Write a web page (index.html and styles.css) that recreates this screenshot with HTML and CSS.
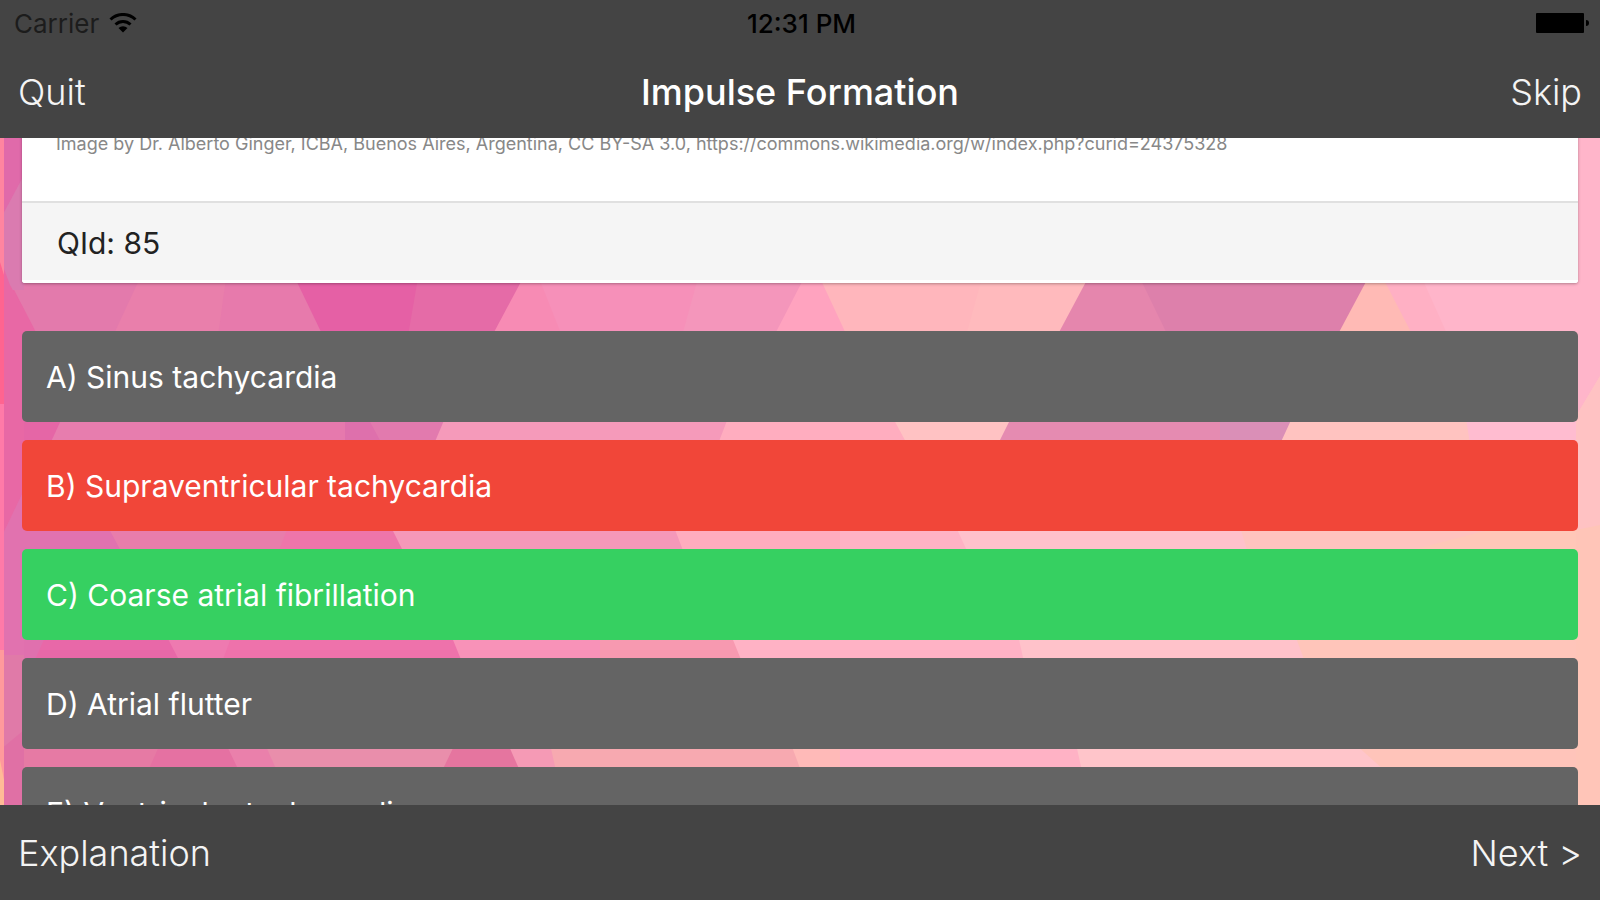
FILE: index.html
```html
<!DOCTYPE html>
<html lang="en">
<head>
    <title>Impulse Formation</title>
    <meta charset="UTF-8">
    <meta name="viewport" content="width=device-width, initial-scale=1">
    <link rel="stylesheet" href="styles.css">
</head>

<body>
    <header class="topbar">
        <div class="status">
            <div class="carrier">
                <span>Carrier</span>
                <svg class="wifi" width="28" height="20" viewBox="0 0 28 20" aria-hidden="true">
                    <path d="M1.500 6.500 A18 18 0 0 1 26.500 6.500" />
                    <path d="M6.500 11.500 A11 11 0 0 1 21.500 11.500" />
                    <path class="wifi-dot" d="M14 19.500 L9.500 15 A7 7 0 0 1 18.500 15 Z" />
                </svg>
            </div>
            <div class="time">12:31 PM</div>
            <svg class="battery" width="54" height="20" viewBox="0 0 54 20" aria-hidden="true">
                <rect x="1" y="0" width="48" height="20" rx="1" />
                <path d="M51 7 Q54 7 54 10 Q54 13 51 13 Z" />
            </svg>
        </div>
        <nav class="navbar">
            <button class="bar-btn" type="button">Quit</button>
            <h1 class="title">Impulse Formation</h1>
            <button class="bar-btn right" type="button">Skip</button>
        </nav>
    </header>

    <main class="content">
        <svg class="backdrop" viewBox="0 138 1600 667" preserveAspectRatio="none" aria-hidden="true">
            <rect x="0" y="138" width="1600" height="667" fill="#ffbcc6" />
            <!-- row 1 -->
            <g>
                <polygon fill="#e868a5" points="0,278 1600,278 1600,336 0,336" />
                <polygon fill="#e37aac" points="8,278 1600,278 1600,336 38,336" />
                <polygon fill="#e97fab" points="140,278 1600,278 1600,336 113,336" />
                <polygon fill="#e77aac" points="226,278 1600,278 1600,336 218,336" />
                <polygon fill="#e560a5" points="295,278 1600,278 1600,336 323,336" />
                <polygon fill="#e56ba7" points="418,278 1600,278 1600,336 408,336" />
                <polygon fill="#f78bb4" points="523,278 1600,278 1600,336 492,336" />
                <polygon fill="#f690b9" points="539,278 1600,278 1600,336 562,336" />
                <polygon fill="#f496bb" points="698,278 1600,278 1600,336 682,336" />
                <polygon fill="#ffa3bf" points="804,278 1600,278 1600,336 774,336" />
                <polygon fill="#ffb6bc" points="820,278 1600,278 1600,336 847,336" />
                <polygon fill="#ffbabd" points="982,278 1600,278 1600,336 966,336" />
                <polygon fill="#e586ad" points="1088,278 1600,278 1600,336 1057,336" />
                <polygon fill="#dd80ab" points="1140,278 1600,278 1600,336 1168,336" />
                <polygon fill="#ffbab5" points="1368,278 1600,278 1600,336 1337,336" />
                <polygon fill="#ffb0c4" points="1383,278 1600,278 1600,336 1413,336" />
                <polygon fill="#ffb5ca" points="1422,278 1600,278 1600,336 1448,336" />
            </g>
            <!-- row 2 -->
            <g>
                <polygon fill="#e566a6" points="0,418 1600,418 1600,444 0,444" />
                <polygon fill="#e77dae" points="62,418 1600,418 1600,444 50,444" />
                <polygon fill="#e679ad" points="160,418 1600,418 1600,444 160,444" />
                <polygon fill="#de70ac" points="345,418 1600,418 1600,444 345,444" />
                <polygon fill="#e27aae" points="368,418 1600,418 1600,444 382,444" />
                <polygon fill="#f59aba" points="445,418 1600,418 1600,444 434,444" />
                <polygon fill="#ffadbf" points="728,418 1600,418 1600,444 718,444" />
                <polygon fill="#ffc2c3" points="893,418 1600,418 1600,444 907,444" />
                <polygon fill="#e58bb1" points="1011,418 1600,418 1600,444 998,444" />
                <polygon fill="#da8fb7" points="1220,418 1600,418 1600,444 1220,444" />
                <polygon fill="#ffc3c0" points="1292,418 1600,418 1600,444 1280,444" />
                <polygon fill="#ffbcd0" points="1466,418 1600,418 1600,444 1470,444" />
            </g>
            <!-- row 3 -->
            <g>
                <polygon fill="#e172af" points="0,527 1600,527 1600,553 0,553" />
                <polygon fill="#e87dab" points="108,527 1600,527 1600,553 122,553" />
                <polygon fill="#ee75aa" points="288,527 1600,527 1600,553 278,553" />
                <polygon fill="#f598b9" points="391,527 1600,527 1600,553 404,553" />
                <polygon fill="#ffacbe" points="674,527 1600,527 1600,553 684,553" />
                <polygon fill="#ffb2c4" points="840,527 1600,527 1600,553 840,553" />
                <polygon fill="#ffc1cb" points="956,527 1600,527 1600,553 968,553" />
                <polygon fill="#ffc3bf" points="1240,527 1600,527 1600,553 1248,553" />
                <polygon fill="#ffc7b8" points="1500,527 1600,527 1600,553 1400,553" />
            </g>
            <!-- row 4 -->
            <g>
                <polygon fill="#e070ae" points="0,635 1600,635 1600,662 0,662" />
                <polygon fill="#e868a8" points="46,635 1600,635 1600,662 34,662" />
                <polygon fill="#ee7ab0" points="166,635 1600,635 1600,662 180,662" />
                <polygon fill="#ee72ab" points="232,635 1600,635 1600,662 222,662" />
                <polygon fill="#f892b8" points="451,635 1600,635 1600,662 462,662" />
                <polygon fill="#f799b0" points="600,635 1600,635 1600,662 600,662" />
                <polygon fill="#ffb2c5" points="731,635 1600,635 1600,662 742,662" />
                <polygon fill="#ffc2ca" points="1018,635 1600,635 1600,662 1024,662" />
                <polygon fill="#ffc5ba" points="1295,635 1600,635 1600,662 1305,662" />
            </g>
            <!-- row 5 -->
            <g>
                <polygon fill="#e67aa4" points="0,744 1600,744 1600,771 0,771" />
                <polygon fill="#e571a2" points="160,744 1600,744 1600,771 148,771" />
                <polygon fill="#ea80ab" points="226,744 1600,744 1600,771 239,771" />
                <polygon fill="#e98eab" points="265,744 1600,744 1600,771 277,771" />
                <polygon fill="#e5759f" points="455,744 1600,744 1600,771 442,771" />
                <polygon fill="#f59ab5" points="508,744 1600,744 1600,771 520,771" />
                <polygon fill="#f7a9b0" points="550,744 1600,744 1600,771 556,771" />
                <polygon fill="#ffbab8" points="791,744 1600,744 1600,771 801,771" />
                <polygon fill="#ffb2c5" points="840,744 1600,744 1600,771 840,771" />
                <polygon fill="#ffc5ca" points="1076,744 1600,744 1600,771 1082,771" />
                <polygon fill="#ffc4ba" points="1355,744 1600,744 1600,771 1385,771" />
            </g>
            <!-- left margin -->
            <g>
                <polygon fill="#e06aaa" points="0,138 24,138 24,290 0,290" />
                <polygon fill="#da7bb0" points="0,220 24,175 24,290 0,290" />
                <polygon fill="#e868a5" points="0,258 10,285 24,310 24,500 0,540" />
                <polygon fill="#e172af" points="24,490 24,670 0,670 0,540" />
                <polygon fill="#e07aa8" points="0,655 24,655 24,750 0,770" />
                <polygon fill="#e070a5" points="24,730 24,805 0,805 0,750" />
                <polygon fill="#ff85a0" points="0,138 4,138 4,290 0,290" />
                <polygon fill="#ff6490" points="0,262 4,275 4,404 0,404" />
                <polygon fill="#ff7aa8" points="0,404 4,404 4,650 0,650" />
                <polygon fill="#ff9a9c" points="0,650 4,650 4,780 0,780" />
                <polygon fill="#ffbb96" points="0,760 4,780 4,805 0,805" />
            </g>
            <!-- right margin -->
            <g>
                <polygon fill="#ffb5ca" points="1576,138 1600,138 1600,376 1576,416" />
                <polygon fill="#ffc2c3" points="1600,376 1600,530 1576,530 1576,416" />
                <polygon fill="#ffc5b8" points="1576,530 1600,525 1600,805 1576,805" />
            </g>
        </svg>

        <section class="card">
            <p class="credit">Image by Dr. Alberto Ginger, ICBA, Buenos Aires, Argentina, CC BY-SA 3.0, https://commons.wikimedia.org/w/index.php?curid=24375328</p>
            <div class="card-footer">QId: 85</div>
        </section>

        <div class="options">
            <button class="option" type="button">A) Sinus tachycardia</button>
            <button class="option wrong" type="button">B) Supraventricular tachycardia</button>
            <button class="option correct" type="button">C) Coarse atrial fibrillation</button>
            <button class="option" type="button">D) Atrial flutter</button>
            <button class="option" type="button">E) Ventricular tachycardia</button>
        </div>
    </main>

    <footer class="bottombar">
        <button class="bar-btn" type="button">Explanation</button>
        <button class="bar-btn right" type="button">Next &gt;</button>
    </footer>
</body>
</html>
```

FILE: styles.css
```css
* {
    box-sizing: border-box;
}

body {
    margin: 0;
    height: 100vh;
    display: flex;
    flex-direction: column;
    overflow: hidden;
    font-family: Inter, "Liberation Sans", sans-serif;
    background: #444;
}

button {
    border: 0;
    margin: 0;
    font-family: inherit;
    cursor: pointer;
}

.topbar {
    flex: none;
    background: #444;
}

.status {
    display: grid;
    grid-template-columns: 1fr auto 1fr;
    align-items: center;
    height: 46px;
    padding: 0 11px 0 14px;
    font-size: 26px;
    color: #000;
}

.carrier {
    display: flex;
    align-items: center;
    gap: 10px;
    color: #1c1c1c;
}

.wifi {
    fill: none;
    stroke: #000;
    stroke-width: 3;
}

.wifi-dot {
    fill: #000;
    stroke: none;
}

.time {
    font-weight: 500;
}

.battery {
    justify-self: end;
}

.navbar {
    display: grid;
    grid-template-columns: 1fr auto 1fr;
    align-items: center;
    height: 92px;
    padding: 0 18px;
}

.title {
    margin: 0;
    font-size: 36px;
    font-weight: 500;
    color: #fff;
}

.bar-btn {
    justify-self: start;
    padding: 0;
    background: none;
    color: #f4f4f4;
    font-size: 36px;
    font-weight: 300;
}

.right {
    justify-self: end;
}

.content {
    position: relative;
    flex: 1;
    min-height: 0;
    overflow: hidden;
    padding: 0 22px;
}

.backdrop {
    position: absolute;
    top: 0;
    left: 0;
    width: 100%;
    height: 100%;
}

.card {
    position: relative;
    margin-top: -6px;
    background: #fff;
    border-radius: 0 0 3px 3px;
    box-shadow: 0 1px 3px rgba(0, 0, 0, 0.3);
}

.credit {
    margin: 0;
    padding: 0 34px 45px;
    font-size: 18px;
    line-height: 24px;
    white-space: nowrap;
    color: #888;
}

.card-footer {
    padding: 4px 35px 0;
    border-top: 2px solid #e0e0e0;
    border-bottom: 3px solid #fff;
    border-radius: 0 0 3px 3px;
    background: #f5f5f5;
    font-size: 30px;
    line-height: 73px;
    color: #222;
}

.options {
    position: relative;
    display: flex;
    flex-direction: column;
    gap: 18px;
    margin-top: 48px;
}

.option {
    padding: 1px 24px 0;
    border-radius: 5px;
    background: #646464;
    color: #fff;
    font-size: 30px;
    line-height: 90px;
    text-align: left;
}

.wrong {
    background: #f14639;
}

.correct {
    background: #36d061;
}

.bottombar {
    flex: none;
    display: flex;
    justify-content: space-between;
    align-items: center;
    height: 95px;
    padding: 0 18px;
    background: #444;
}
```
